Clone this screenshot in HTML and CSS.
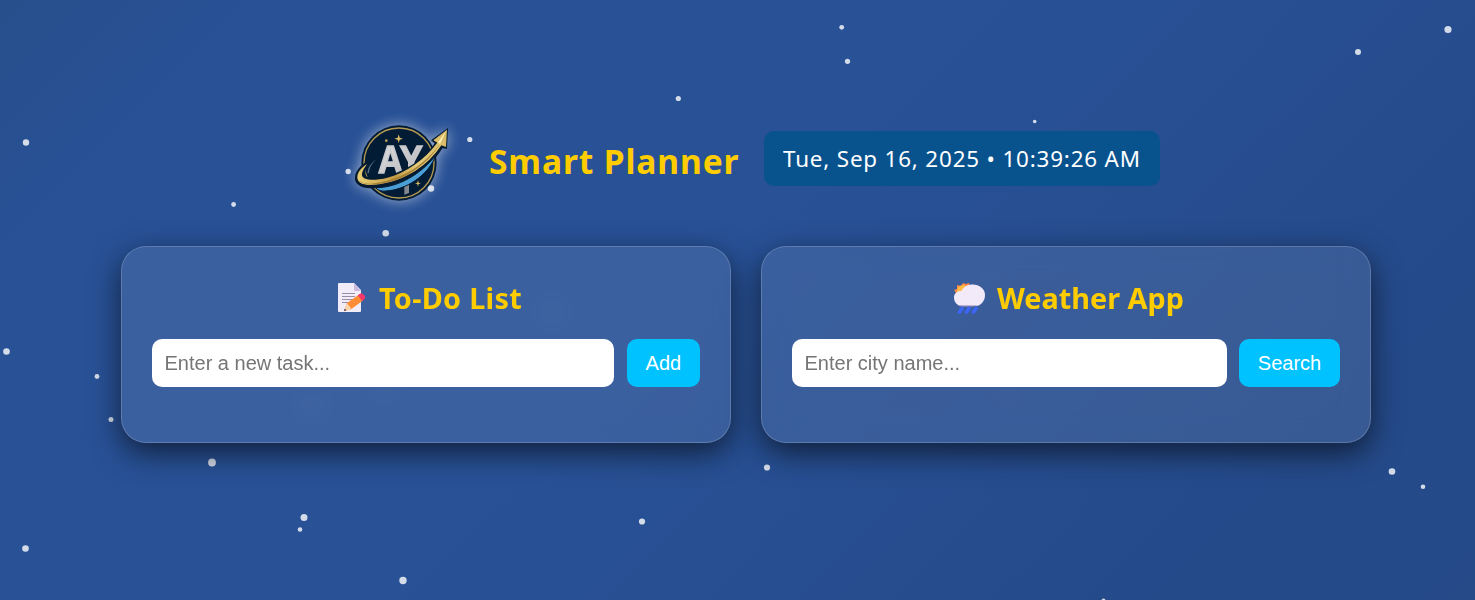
FILE: index.html
```html
<!DOCTYPE html>
<html lang="en">
<head>
<meta charset="utf-8">
<title>Smart Planner</title>
<link rel="stylesheet" href="styles.css">
</head>
<body>
<svg class="stars" viewBox="0 0 1475 600" aria-hidden="true">
  <circle cx="26" cy="142.500" r="3.200"/><circle cx="6.500" cy="351.500" r="3.300"/><circle cx="97" cy="376.500" r="2.400"/>
  <circle cx="111" cy="419.500" r="2.500"/><circle cx="212" cy="462.500" r="3.900"/><circle cx="304" cy="517.500" r="3.500"/>
  <circle cx="300" cy="529.500" r="2.300"/><circle cx="25.500" cy="548.500" r="3.300"/><circle cx="403" cy="580.500" r="3.700"/>
  <circle cx="642" cy="521.500" r="3.100"/><circle cx="767" cy="467.500" r="3.100"/><circle cx="1392" cy="471.500" r="3.300"/>
  <circle cx="1423" cy="486.800" r="2.300"/><circle cx="1103.500" cy="600.500" r="2"/><circle cx="1448" cy="29.500" r="3.600"/>
  <circle cx="1358" cy="52" r="3"/><circle cx="841.700" cy="27.300" r="2.400"/><circle cx="847.500" cy="61.300" r="2.600"/>
  <circle cx="678.300" cy="98.500" r="2.600"/><circle cx="1034.700" cy="121.500" r="1.800"/><circle cx="469.800" cy="139.500" r="2.600"/>
  <circle cx="348.200" cy="171.500" r="2.700"/><circle cx="431" cy="188.500" r="3.200"/><circle cx="233.600" cy="204.500" r="2.400"/>
  <circle cx="385.700" cy="233.300" r="3.300"/><circle cx="552" cy="312" r="2.300"/><circle cx="312" cy="406" r="2.300"/>
  <circle cx="385" cy="386" r="2"/><circle cx="1008" cy="388" r="2"/><circle cx="994" cy="280" r="1.800"/>
</svg>
<div class="page">
  <header class="header">
    <svg class="logo" viewBox="0 0 104 85" aria-hidden="true">
      <defs>
        <linearGradient id="gold" gradientUnits="userSpaceOnUse" x1="65" y1="200" x2="338" y2="70"><stop offset="0" stop-color="#e8ce74"/><stop offset=".35" stop-color="#c29a42"/><stop offset=".6" stop-color="#e5cb77"/><stop offset="1" stop-color="#d8ba66"/></linearGradient>
        <linearGradient id="silver" x1="0" y1="0" x2="1" y2="1"><stop offset="0" stop-color="#e2e2e4"/><stop offset="1" stop-color="#b0b1b5"/></linearGradient>
      </defs>
      <g transform="translate(0 .7) scale(.33333) translate(-45 -30)">
        <circle cx="192" cy="157" r="113" fill="#031c35"/>
        <circle cx="192" cy="157" r="105" fill="none" stroke="#b59b52" stroke-width="4"/>
        <path d="M191 71l3 10 10 3-10 3-3 10-3-10-10-3 10-3zM249 208l2 8 7 2-7 2-2 8-2-8-7-2 7-2z" fill="#dfbd62"/>
        <circle cx="154" cy="90" r="4" fill="#b59b52"/>
        <text class="monogram" x="129" y="187" textLength="134" lengthAdjust="spacingAndGlyphs">AY</text>
        <path d="M208 222l14-6v31l-14 5z" fill="#85888f"/>
        <path d="M98 151C72 165 55 190 61 211c8 22 46 26 85 19C210 221 283 178 322 113l14 1 3-62-51 37 11 9C271 143 214 180 159 195c-32 8-64 11-67-2-3-14 3-28 6-42z" fill="#031a31"/>
        <path d="M122 231C190 231 258 190 302 134 280 196 211 238 152 241q-20 2-30-10z" fill="#4aa0d6" stroke="#031a31" stroke-width="3"/>
        <path d="M97 160C75 172 62 192 69 209c9 17 44 17 79 9C211 207 278 166 319 104l14 5 3-52-41 32 12 7C270 145 215 186 157 201c-36 9-69 9-75-4-4-11 5-24 15-37z" fill="url(#gold)"/>
        <path d="M70 207c14 18 55 13 92 2 61-18 112-55 153-108-38 59-93 98-153 113-40 10-82 11-92-7z" fill="#a57f36"/>
        <path d="M333 61l-24 34 6 5z" fill="#fff0b5"/>
        <path d="M97 188q1-25 28-43-23 20-23 42z" fill="#586c83"/>
      </g>
    </svg>
    <h1 class="title">Smart Planner</h1>
    <div class="clock">Tue, Sep 16, 2025 • 10:39:26 AM</div>
  </header>
  <main class="cards">
    <section class="card">
      <h2 class="card-title">
        <svg class="icon" viewBox="0 0 36 36" aria-hidden="true">
          <path d="M6 3h15l7 7v21a1 1 0 0 1-1 1H6a1 1 0 0 1-1-1V4a1 1 0 0 1 1-1z" fill="#f2ecf8"/>
          <path d="M21 3l7 8h-5.500a1.500 1.500 0 0 1-1.500-1.500z" fill="#cbbadd"/>
          <path d="M9 13.500h13M9 16.500h13M9 19.500h11M9 22.500h7" stroke="#998ea8" stroke-width="1.200"/>
          <path d="M14 23l12-8.500 4.500 5.500-12 9-7.500 2z" fill="#ff8c35"/>
          <path d="M14 23l4.500 6-7.500 2z" fill="#fbd5ae"/><path d="M11.700 28.800L11 31l2.500-.7z" fill="#38213c"/>
          <path d="M24.800 15.200l2.700-1.800c2-1 6.500 4 4 5.500L29.200 20.900z" fill="#f9376d"/>
        </svg>
        <span class="todo-label">To-Do List</span>
      </h2>
      <form class="row">
        <input class="field" type="text" placeholder="Enter a new task...">
        <button class="button" type="button">Add</button>
      </form>
    </section>
    <section class="card">
      <h2 class="card-title">
        <svg class="icon" viewBox="0 0 36 36" aria-hidden="true">
          <path d="M12 3l3 1 3-1 1 3-5 10-10 1 1-4-2-3 3-1V5l4 1z" fill="#ff8745"/>
          <circle cx="12" cy="11" r="6" fill="#ffba42"/>
          <path d="M11 26a8 8 0 0 1-8-8.500c0-4.500 4-7 7.500-6.500 2-4 6-6.500 11-6.500C28.500 4.500 34 9 34 15S30 26 24.500 26z" fill="#f2eaf8"/>
          <path d="M7 25.300h19q-2 1.200-5 1.200H11q-2 0-4-1.200z" fill="#a99fc7"/>
          <path d="M11 28.500l-2.500 3.500m9.500-3.500l-2.500 3.500m9.500-3.500l-2.500 3.500" stroke="#3c64f5" stroke-width="3.800" stroke-linecap="round"/>
        </svg>
        <span>Weather App</span>
      </h2>
      <form class="row">
        <input class="field" type="text" placeholder="Enter city name...">
        <button class="button" type="button">Search</button>
      </form>
    </section>
  </main>
</div>
</body>
</html>
```
FILE: styles.css
```css
* { box-sizing: border-box; }
body {
  margin: 0;
  height: 600px;
  overflow: hidden;
  color: #fff;
  font-family: "Segoe UI", "Noto Sans", "Open Sans", sans-serif;
  background: linear-gradient(135deg, #274f8b 0%, #285196 12%, #285196 48%, #254a8a 85%, #264a88 100%);
}
.stars { position: absolute; inset: 0; width: 1475px; height: 600px; fill: #fff; fill-opacity: .8; }
.page { position: relative; padding: 120px 104px 0 121px; }
.header { display: flex; align-items: center; height: 85px; padding-left: 229px; }
.logo { flex: none; width: 104px; height: 85px; overflow: visible; filter: drop-shadow(0 0 7px rgba(255, 255, 255, .55)); }
.monogram { font: bold 114px "Liberation Sans", sans-serif; fill: url(#silver); stroke: #c7c8cb; stroke-width: 5px; }
.title { flex: none; width: 249px; margin: -4px 26px 0 35px; color: #ffcc00; font-size: 33.600px; line-height: 50px; letter-spacing: .850px; white-space: nowrap; }
.clock { flex: none; width: 396px; height: 55px; margin-top: -8px; padding-left: 19px; border-radius: 10px; background: #08538e; font-size: 22.400px; line-height: 55px; letter-spacing: .830px; white-space: nowrap; }
.cards { display: grid; grid-template-columns: 610px 610px; gap: 30px; margin-top: 41px; }
.card { height: 197px; padding: 30px; border: 1px solid rgba(255, 255, 255, .18); border-radius: 25px; background: rgba(255, 255, 255, .09); box-shadow: 0 10px 30px rgba(0, 0, 0, .6); backdrop-filter: blur(12px); }
.card-title { display: flex; align-items: center; justify-content: center; gap: 10px; height: 42px; margin: 0 0 20px; padding-left: 3px; color: #ffcc00; font-size: 28.800px; line-height: 42px; white-space: nowrap; }
.todo-label { letter-spacing: .300px; }
.icon { width: 36px; height: 36px; }
.row { display: flex; gap: 12.500px; margin: 0; }
.field, .button { height: 48px; border: 0; border-radius: 10px; font: 20px "Liberation Sans", Arial, sans-serif; }
.field { flex: 1; min-width: 0; padding: 0 12.500px; background: #fff; }
.field::placeholder { color: #757575; }
.button { padding: 0 18.800px; color: #fff; background: #00c2ff; }
```
